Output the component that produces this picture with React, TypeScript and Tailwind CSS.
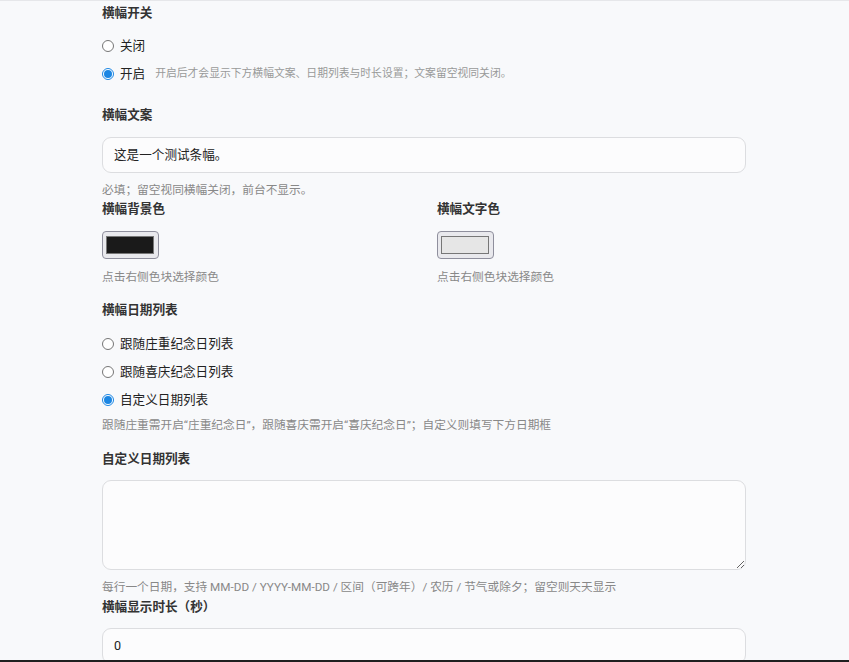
import React from "react";

const FONT = { fontFamily: 'Roboto, "Noto Sans CJK SC", "Noto Sans", sans-serif' };

function Radio({ checked, label, hint }: { checked?: boolean; label: string; hint?: string }) {
  return (
    <div className="flex h-[28px] items-center">
      {checked ? (
        <span className="flex h-[12px] w-[12px] shrink-0 items-center justify-center rounded-full border border-[#1b86e3] bg-white">
          <span className="h-[8px] w-[8px] rounded-full bg-[#1b86e3]" />
        </span>
      ) : (
        <span className="h-[12px] w-[12px] shrink-0 rounded-full border border-[#767676] bg-white" />
      )}
      <span className="ml-[6px] text-[12.6px] leading-[20px] text-[#222]">{label}</span>
      {hint && <span className="ml-[10px] text-[10.8px] leading-[20px] text-[#999]">{hint}</span>}
    </div>
  );
}

function Heading({ children, className = "" }: { children: React.ReactNode; className?: string }) {
  return <div className={`h-[20px] text-[12.6px] font-bold leading-[20px] text-[#333] ${className}`}>{children}</div>;
}

function Hint({ children, className = "" }: { children: React.ReactNode; className?: string }) {
  return <div className={`h-[18px] text-[11.7px] leading-[18px] text-[#888] ${className}`}>{children}</div>;
}

function Swatch({ color }: { color: string }) {
  return (
    <div className="mt-[12px] h-[28px] w-[57px] rounded-[4px] border border-[#8f8f9d] bg-[#e9e9ed] pl-[3px] pr-[4px] pt-[4px] pb-[4px]">
      <div className="h-full w-full border border-[#777]" style={{ backgroundColor: color }} />
    </div>
  );
}

export default function App() {
  return (
    <div className="flex h-[662px] w-full flex-col overflow-hidden bg-[#f8f9fb]" style={FONT}>
      <div className="h-[1px] w-full shrink-0 bg-[#e6e7ea]" />
      <div className="min-h-0 flex-1 overflow-hidden">
        <div className="ml-[102px] w-[644px]">
          <Heading className="mt-[2px]">横幅开关</Heading>
          <div className="mt-[9px]">
            <Radio label="关闭" />
            <Radio checked label="开启" hint="开启后才会显示下方横幅文案、日期列表与时长设置；文案留空视同关闭。" />
          </div>

          <Heading className="mt-[17px]">横幅文案</Heading>
          <div className="mt-[12px] flex h-[36px] items-center rounded-[9px] border border-[#dcdde0] bg-[#fcfcfd] pl-[11px] text-[12.6px] text-[#222]">
            这是一个测试条幅。
          </div>
          <Hint className="mt-[8px]">必填；留空视同横幅关闭，前台不显示。</Hint>

          <div className="grid grid-cols-2 gap-x-[26px]">
            <div>
              <Heading>横幅背景色</Heading>
              <Swatch color="#1a1a1a" />
              <Hint className="mt-[9px]">点击右侧色块选择颜色</Hint>
            </div>
            <div>
              <Heading>横幅文字色</Heading>
              <Swatch color="#e6e6e6" />
              <Hint className="mt-[9px]">点击右侧色块选择颜色</Hint>
            </div>
          </div>

          <Heading className="mt-[14px]">横幅日期列表</Heading>
          <div className="mt-[10px]">
            <Radio label="跟随庄重纪念日列表" />
            <Radio label="跟随喜庆纪念日列表" />
            <Radio checked label="自定义日期列表" />
          </div>
          <Hint className="mt-[2px]">跟随庄重需开启“庄重纪念日”，跟随喜庆需开启“喜庆纪念日”；自定义则填写下方日期框</Hint>

          <Heading className="mt-[15px]">自定义日期列表</Heading>
          <textarea
            className="mt-[11px] block h-[90px] w-full rounded-[9px] border border-[#dcdde0] bg-[#fcfcfd] outline-none"
            defaultValue=""
          />
          <Hint className="mt-[8px]">每行一个日期，支持 MM-DD / YYYY-MM-DD / 区间（可跨年）/ 农历 / 节气或除夕；留空则天天显示</Hint>

          <Heading className="mt-[1px]">横幅显示时长（秒）</Heading>
          <div className="mt-[11px] flex h-[36px] items-center rounded-[9px] border border-[#dcdde0] bg-[#fcfcfd] pl-[11px] text-[12.6px] text-[#222]">
            0
          </div>
        </div>
      </div>
      <div className="h-[2px] w-full shrink-0 bg-[#1f1f1f]" />
    </div>
  );
}
